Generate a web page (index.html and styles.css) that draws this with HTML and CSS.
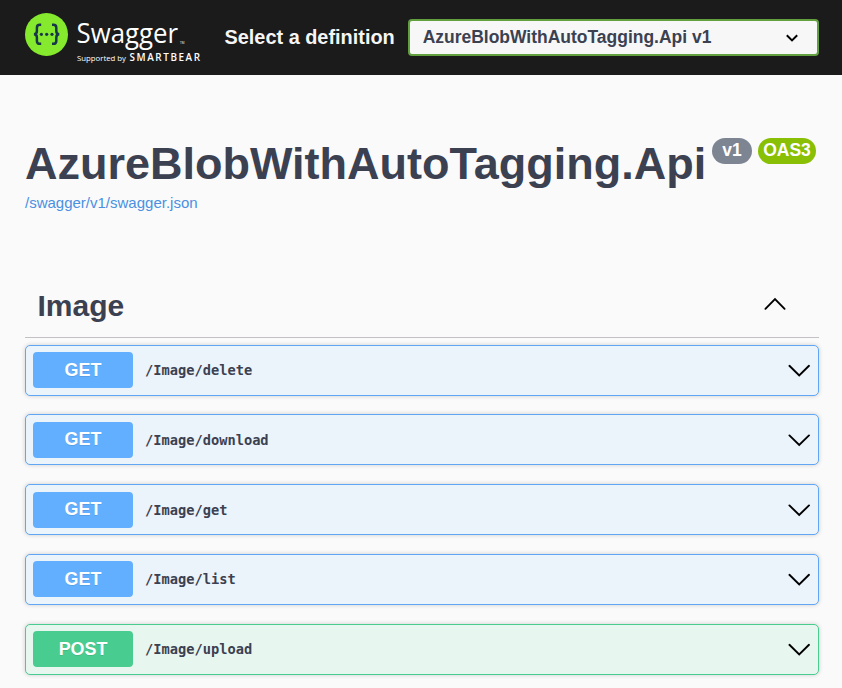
FILE: index.html
```
<!DOCTYPE html>
<html lang="en">
<head>
<meta charset="utf-8">
<title>Swagger UI</title>
<link rel="stylesheet" href="styles.css">
</head>
<body>
<header class="topbar">
  <svg class="logo" width="180" height="56" viewBox="0 0 180 56">
    <circle cx="21.5" cy="21.5" r="21.5" fill="#85ea2d"/>
    <g fill="none" stroke="#173647" stroke-width="2.5">
      <path d="M16.200 11.800h-1.400q-2.900 0-2.900 2.900v3.400q0 3.200-3 3.200q3 0 3 3.200v3.400q0 2.900 2.900 2.900h1.400"/>
      <path d="M27 11.800h1.400q2.900 0 2.900 2.900v3.400q0 3.200 3 3.200q-3 0-3 3.200v3.400q0 2.900-2.900 2.900h-1.400"/>
    </g>
    <g fill="#173647"><circle cx="16.400" cy="21.300" r="1.600"/><circle cx="21.700" cy="21.300" r="1.600"/><circle cx="27" cy="21.300" r="1.600"/></g>
    <text class="logo-name" x="51.500" y="30" textLength="101.500" lengthAdjust="spacingAndGlyphs">Swagger</text>
    <text class="logo-tm" x="155" y="30.500">TM</text>
    <text class="logo-by" x="52" y="48" textLength="49" lengthAdjust="spacingAndGlyphs">Supported by</text>
    <text class="logo-brand" x="104.500" y="48" textLength="70.500">SMARTBEAR</text>
  </svg>
  <span class="select-label">Select a definition</span>
  <div class="select"><span>AzureBlobWithAutoTagging.Api v1</span>
    <svg width="14" height="10" viewBox="0 0 14 10"><path d="M1.800 2.200L7 7.400l5.200-5.200" fill="none" stroke="#000" stroke-width="2"/></svg>
  </div>
</header>
<main>
  <section class="info">
    <h1>AzureBlobWithAutoTagging.Api</h1>
    <span class="badge version">v1</span>
    <span class="badge oas">OAS3</span>
  </section>
  <a class="spec">/swagger/v1/swagger.json</a>
  <section class="tag">
    <h2>Image</h2>
    <svg width="24" height="14" viewBox="0 0 24 14"><path class="chevron" d="M2.400 11.800L12 2.200l9.600 9.600"/></svg>
  </section>
  <div class="operations">
    <div class="op get"><span class="method">GET</span><span class="path">/Image/delete</span><svg width="24" height="14" viewBox="0 0 24 14"><path class="chevron" d="M2.400 2.800L12.200 12.400l9.800-9.600"/></svg></div>
    <div class="op get"><span class="method">GET</span><span class="path">/Image/download</span><svg width="24" height="14" viewBox="0 0 24 14"><path class="chevron" d="M2.400 2.400L12.200 12l9.800-9.600"/></svg></div>
    <div class="op get"><span class="method">GET</span><span class="path">/Image/get</span><svg width="24" height="14" viewBox="0 0 24 14"><path class="chevron" d="M2.400 2.400L12.200 12l9.800-9.600"/></svg></div>
    <div class="op get"><span class="method">GET</span><span class="path">/Image/list</span><svg width="24" height="14" viewBox="0 0 24 14"><path class="chevron" d="M2.400 2.800L12.200 12.400l9.800-9.600"/></svg></div>
    <div class="op post"><span class="method">POST</span><span class="path">/Image/upload</span><svg width="24" height="14" viewBox="0 0 24 14"><path class="chevron" d="M2.400 2.800L12.200 12.400l9.800-9.600"/></svg></div>
  </div>
</main>
</body>
</html>
```
FILE: styles.css
```
* { box-sizing: border-box; }
body { margin: 0; height: 688px; overflow: hidden; background: #fafafa; color: #3b4151; font-family: "Liberation Sans", Arial, sans-serif; }
h1, h2 { margin: 0; }
svg { flex: none; display: block; }
.topbar { height: 75px; background: #1b1b1b; display: flex; align-items: flex-start; padding: 0 23px 0 25px; }
.logo { margin-top: 13px; font-family: "Open Sans", sans-serif; fill: #fff; }
.logo-name { font-size: 28px; }
.logo-tm { font-size: 3px; }
.logo-by { font-size: 8px; }
.logo-brand { font-size: 9.900px; font-weight: 600; }
.select-label { margin-left: 19.500px; width: 183.500px; line-height: 24px; margin-top: 25px; font-size: 19.900px; font-weight: 700; color: #f5f5f5; white-space: nowrap; }
.select { flex: 1; height: 37px; margin-top: 19px; border: 2px solid #62a03f; border-radius: 4px; background: #f7f7f7; display: flex; align-items: center; justify-content: space-between; padding: 0 18.500px 0 12.700px; font-size: 17.480px; font-weight: 700; }
main { padding: 0 23px 0 25px; }
.info { display: flex; padding-top: 63px; height: 119px; }
h1 { font-size: 45px; line-height: 51px; white-space: nowrap; width: 687px; }
.badge { height: 26px; border-radius: 13px; color: #fff; font-weight: 700; font-size: 17.500px; line-height: 24px; text-align: center; }
.version { width: 40px; background: #7d8492; }
.oas { width: 58px; margin-left: 6px; background: #89bf04; }
.spec { display: block; height: 18px; line-height: 18px; font-size: 15px; color: #4990e2; }
.tag { height: 64px; margin-top: 62px; padding: 0 32.500px 0 12.500px; border-bottom: 1px solid #c5c0c5; display: flex; align-items: center; justify-content: space-between; }
.tag svg { margin-bottom: 4px; }
h2 { font-size: 30px; line-height: 34px; }
.chevron { fill: none; stroke: #000; stroke-width: 1.900; stroke-linecap: round; }
.operations { display: grid; gap: 18.750px; padding-top: 6.600px; }
.op { height: 51px; border: 1px solid; border-radius: 5px; display: flex; align-items: center; padding: 0 7px; box-shadow: 0 0 4px rgba(0,0,0,.19); }
.get { border-color: #61a5f5; background: #ebf3fb; }
.post { border-color: #49cc90; background: #e8f6f0; }
.method { width: 100px; height: 36px; padding-top: .5px; border-radius: 4px; color: #fff; text-align: center; font-weight: 700; font-size: 17.900px; line-height: 35px; text-shadow: 0 1px 0 rgba(0,0,0,.1); }
.get .method { background: #61affe; }
.post .method { background: #49cc90; }
.path { flex: 1; margin-left: 12px; font: 700 13.700px "DejaVu Sans Mono", monospace; }
```
